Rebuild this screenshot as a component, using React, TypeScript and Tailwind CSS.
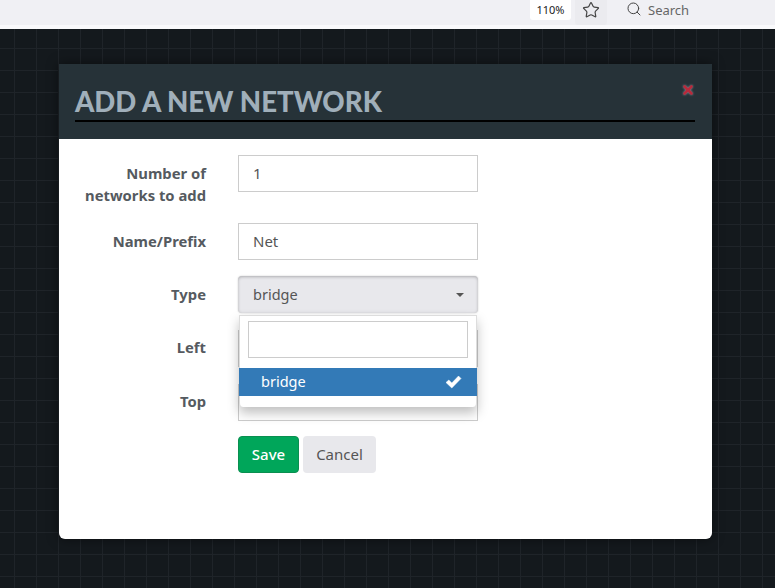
import { Search, Star, X } from "lucide-react";
import React from "react";

const font = "font-['Noto_Sans','Open_Sans',sans-serif]";

function Row({ label, value, pt = "pt-[7px]", mb = "mb-[31px]" }: { label: React.ReactNode; value: string; pt?: string; mb?: string }) {
  return (
    <div className={`flex items-start ${mb}`}>
      <label className={`w-[147px] ${pt} text-right text-[14.8px] font-bold leading-[22px] text-[#555a60]`}>{label}</label>
      <input
        readOnly
        value={value}
        className="ml-[32px] h-[37px] w-[240px] border border-[#ccc] bg-white px-[14px] pb-[1px] text-[15px] text-[#555] outline-none"
      />
    </div>
  );
}

export default function App() {
  return (
    <div className={`h-[588px] w-[775px] overflow-hidden bg-white ${font}`}>
      <div className="flex h-[25px] items-start justify-end bg-[#f0f0f4]">
        <div className="mr-[4px] flex h-[20px] w-[41px] items-center justify-center rounded-b-[3px] bg-white text-[11px] text-[#222]">110%</div>
        <div className="flex h-[25px] w-[32px] items-start justify-center rounded-b-[3px] bg-[#ebebef] pt-[1px]">
          <Star size={18} strokeWidth={1.6} color="#444" />
        </div>
        <div className="ml-[10px] flex h-[25px] w-[158px] items-start gap-[6px] rounded-bl-[3px] bg-[#f0f0f4] pl-[9px]">
          <Search size={16} strokeWidth={1.5} color="#444" className="mt-[1px]" />
          <span className="text-[13px] leading-[20px] text-[#666]">Search</span>
        </div>
      </div>
      <div className="h-[4px] bg-[#f9f9fb]" />
      <div className="h-[559px] bg-[#14191d] bg-[linear-gradient(to_right,#1f2429_1px,transparent_1px),linear-gradient(to_bottom,#1f2429_1px,transparent_1px)] bg-[size:22px_22px] bg-[position:14px_19px] pl-[59px] pt-[35px]">
        <div className="h-[475px] w-[653px] overflow-hidden rounded-b-[6px] bg-white shadow-[0_0_12px_rgba(0,0,0,0.5)]">
          <div className="relative h-[75px] bg-[#263238] pl-[16px] pr-[17px] pt-[20px]">
            <h2 className="border-b-2 border-black pb-[1px] font-['Lato',sans-serif] text-[27.6px] font-black leading-[35px] text-[#a0afba]">
              ADD A NEW NETWORK
            </h2>
            <X size={14} strokeWidth={4.5} color="#b82a3c" className="absolute right-[17px] top-[19px] drop-shadow-[0_0_1px_#8a9aa5]" />
          </div>
          <div className="pt-[16px]">
            <Row label={<>Number of<br />networks to add</>} value="1" mb="mb-[17px]" />
            <Row label="Name/Prefix" value="Net" mb="mb-[16px]" />
            <div className="relative mb-[17px] flex items-start">
              <label className="w-[147px] pt-[7px] text-right text-[14.8px] font-bold leading-[22px] text-[#555a60]">Type</label>
              <div className="ml-[32px] flex h-[37px] w-[240px] items-center justify-between rounded-[4px] bg-[#e8e8ec] pl-[15px] pr-[14px] text-[14.5px] text-[#555] shadow-[inset_0_1px_3px_rgba(0,0,0,0.25),0_0_2px_rgba(0,0,0,0.2)]">
                bridge
                <span className="h-0 w-0 border-x-[4px] border-t-[4px] border-x-transparent border-t-[#555]" />
              </div>
              <div className="absolute left-[180px] top-[39px] z-10 h-[92px] w-[238px] rounded-b-[4px] border-x border-t border-[#ddd] bg-white shadow-[0_6px_12px_rgba(0,0,0,0.25)]">
                <div className="px-[8px] pt-[5px]">
                  <div className="h-[37px] border border-[#ccc] bg-white" />
                </div>
                <div className="-mx-[1px] mt-[10px] flex h-[28px] items-center justify-between bg-[#337ab7] pl-[22px] pr-[15px] text-[14.5px] text-white">
                  bridge
                  <svg width="17" height="14" viewBox="0 0 17 14" fill="white" stroke="white" strokeWidth="0.5"><path d="M1 7.5 3.8 5l3 3L13.5 1 16 3.5 6.8 13z" /></svg>
                </div>
              </div>
            </div>
            <Row label="Left" value="" pt="pt-[6px]" mb="mb-[17px]" />
            <Row label="Top" value="" pt="pt-[6px]" mb="mb-[15px]" />
            <div className="ml-[179px] flex gap-[4px]">
              <button className="h-[37px] w-[61px] rounded-[4px] border border-[#0a8f50] bg-[#00a65a] text-[15px] font-medium text-white">Save</button>
              <button className="h-[37px] w-[73px] rounded-[4px] bg-[#e8e8ec] text-[15px] text-[#555]">Cancel</button>
            </div>
          </div>
        </div>
      </div>
    </div>
  );
}
